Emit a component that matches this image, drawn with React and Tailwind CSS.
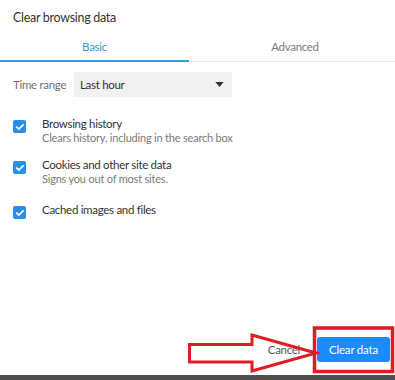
import React from "react";

function Check() {
  return (
    <div className="w-[13px] h-[13px] rounded-[2px] bg-[#2a8de6] flex items-center justify-center shrink-0">
      <svg viewBox="0 0 12 12" className="w-[10px] h-[10px]" fill="none" stroke="white" strokeWidth="2" strokeLinecap="square">
        <path d="M2.2 6.2l2.4 2.3 5-5" />
      </svg>
    </div>
  );
}

function Row({ title, sub, className = "" }) {
  return (
    <div className={`flex items-start ${className}`}>
      <div className="pl-[13px] pt-[3px] w-[42px]">
        <Check />
      </div>
      <div className="flex flex-col">
        <span className="text-[11.5px] tracking-[-0.3px] leading-[14px] text-[#333]">{title}</span>
        {sub && <span className="text-[11px] tracking-[-0.2px] leading-[14px] text-[#7a7a7a]">{sub}</span>}
      </div>
    </div>
  );
}

export default function App() {
  return (
    <div
      className="relative w-[395px] h-[380px] bg-white flex flex-col overflow-hidden"
      style={{ fontFamily: '"Segoe UI", Lato, "Liberation Sans", sans-serif' }}
    >
      {/* ── Header ───────────────────────────────────────── */}
      <div className="px-[13px] pt-[9px] h-[33px] text-[12.5px] tracking-[-0.3px] text-[#333]">Clear browsing data</div>

      {/* ── Tabs ─────────────────────────────────────────── */}
      <div className="flex h-[29px] border-b border-[#e6e6e6]">
        <div className="w-[189px] flex items-center justify-center text-[11.5px] tracking-[-0.3px] text-[#3a9ad6] border-b-2 border-[#3a9ad6] -mb-px">
          Basic
        </div>
        <div className="flex-1 flex items-center justify-center pl-[6px] text-[11.5px] tracking-[-0.3px] text-[#7a7a7a]">Advanced</div>
      </div>

      {/* ── Time range ───────────────────────────────────── */}
      <div className="flex items-center mt-[10px] px-[13px]">
        <span className="w-[61px] text-[11.5px] tracking-[-0.3px] text-[#6f6f6f]">Time range</span>
        <div className="w-[158px] h-[25px] bg-[#f1f1f1] flex items-center justify-between pl-[6px] pr-[8px]">
          <span className="text-[11.5px] tracking-[-0.3px] text-[#333]">Last hour</span>
          <svg viewBox="0 0 10 6" className="w-[9px] h-[5px]">
            <path d="M0 0h10L5 6z" fill="#333" />
          </svg>
        </div>
      </div>

      {/* ── Options ──────────────────────────────────────── */}
      <Row className="mt-[20px]" title="Browsing history" sub="Clears history, including in the search box" />
      <Row className="mt-[13px]" title="Cookies and other site data" sub="Signs you out of most sites." />
      <Row className="mt-[17px]" title="Cached images and files" />

      {/* ── Footer ───────────────────────────────────────── */}
      <div className="mt-auto flex items-center justify-end gap-[17px] pr-[5px] pb-[13px]">
        <span className="text-[11.5px] tracking-[-0.3px] text-[#555]">Cancel</span>
        <div className="w-[73px] h-[25px] rounded-[3px] bg-[#1a8cff] text-white text-[11.5px] tracking-[-0.2px] flex items-center justify-center">
          Clear data
        </div>
      </div>
      <div className="h-[5px] bg-[#505050]" />

      {/* ── Annotation overlay ───────────────────────────── */}
      <svg className="absolute inset-0 pointer-events-none" width="395" height="380" viewBox="0 0 395 380">
        <path
          d="M189.5 344.5 H252 V335 L316 353 L252 371 V362 H189.5 Z"
          fill="none"
          stroke="#e01b24"
          strokeWidth="3"
          strokeLinejoin="miter"
        />
        <rect x="314.5" y="328" width="78" height="43.5" fill="none" stroke="#e01b24" strokeWidth="3.5" />
      </svg>
    </div>
  );
}
